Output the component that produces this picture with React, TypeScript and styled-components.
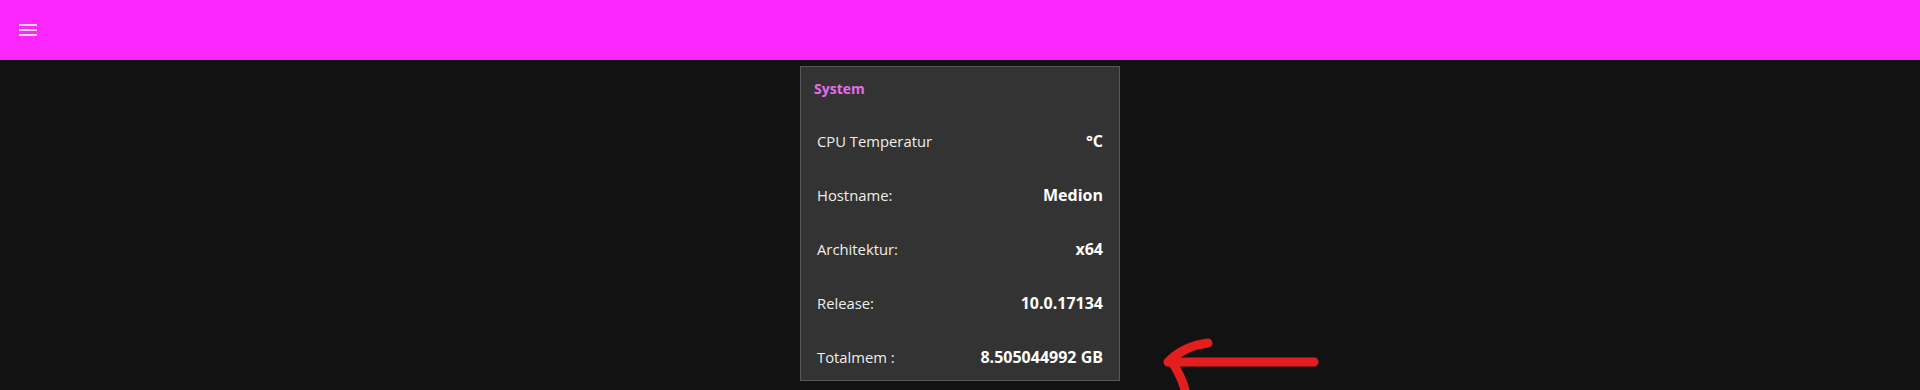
import React from "react";
import styled, { createGlobalStyle } from "styled-components";

const Global = createGlobalStyle`
  html, body { margin: 0; padding: 0; background: #121212; }
  body { font-family: "Open Sans", "Noto Sans", sans-serif; color: #eeeeee; }
  * { box-sizing: border-box; }
`;

const Page = styled.div`
  min-height: 390px;
  background: #121212;
`;

const AppBar = styled.header`
  height: 60px;
  background: #fb26fb;
  display: flex;
  align-items: center;
  padding: 0 16px;
  box-shadow: 0 1px 3px rgba(0, 0, 0, 0.5);
`;

const MenuButton = styled.button`
  width: 24px;
  height: 24px;
  padding: 0;
  border: 0;
  background: transparent;
  display: flex;
  align-items: center;
  justify-content: center;
  cursor: pointer;
  color: rgba(255, 255, 255, 0.82);
`;

const Main = styled.main`
  display: flex;
  justify-content: center;
  padding-top: 6px;
`;

const CardWrap = styled.div`
  position: relative;
`;

const Card = styled.section`
  width: 320px;
  background: #333333;
  border: 1px solid #575757;
  display: flex;
  flex-direction: column;
`;

const Title = styled.div`
  height: 43px;
  display: flex;
  align-items: center;
  padding: 0 13px;
  font-size: 14px;
  font-weight: 700;
  color: #e46ee9;
`;

const Row = styled.div`
  height: 54px;
  display: flex;
  justify-content: space-between;
  align-items: center;
  padding: 7px 16px 0 16px;
  line-height: 20px;
`;

const Label = styled.span`
  color: #eeeeee;
  font-size: 14.8px;
`;

const Value = styled.span`
  color: #ffffff;
  font-weight: 700;
  font-size: 16px;
`;

const Arrow = styled.svg`
  position: absolute;
  left: calc(100% + 39px);
  top: 269px;
  overflow: visible;
`;

const rows: [string, string][] = [
  ["CPU Temperatur", "°C"],
  ["Hostname:", "Medion"],
  ["Architektur:", "x64"],
  ["Release:", "10.0.17134"],
  ["Totalmem :", "8.505044992 GB"],
];

export default function App() {
  return (
    <Page>
      <Global />
      <AppBar>
        <MenuButton aria-label="menu">
          <svg width="24" height="24" viewBox="0 0 24 24" fill="currentColor">
            <path d="M3 18h18v-2H3v2zm0-5h18v-2H3v2zm0-7v2h18V6H3z" />
          </svg>
        </MenuButton>
      </AppBar>
      <Main>
        <CardWrap>
          <Card>
            <Title>System</Title>
            {rows.map(([l, v]) => (
              <Row key={l}>
                <Label>{l}</Label>
                <Value>{v}</Value>
              </Row>
            ))}
          </Card>
          <Arrow width="160" height="60" viewBox="0 0 160 60">
            <g fill="none" stroke="#e41e1e" strokeWidth="9" strokeLinecap="round" strokeLinejoin="round">
              <path d="M9 27 L155 27" />
              <path d="M11 25 Q26 11 49 8" />
              <path d="M13 27 Q22 40 27 58" />
            </g>
          </Arrow>
        </CardWrap>
      </Main>
    </Page>
  );
}
